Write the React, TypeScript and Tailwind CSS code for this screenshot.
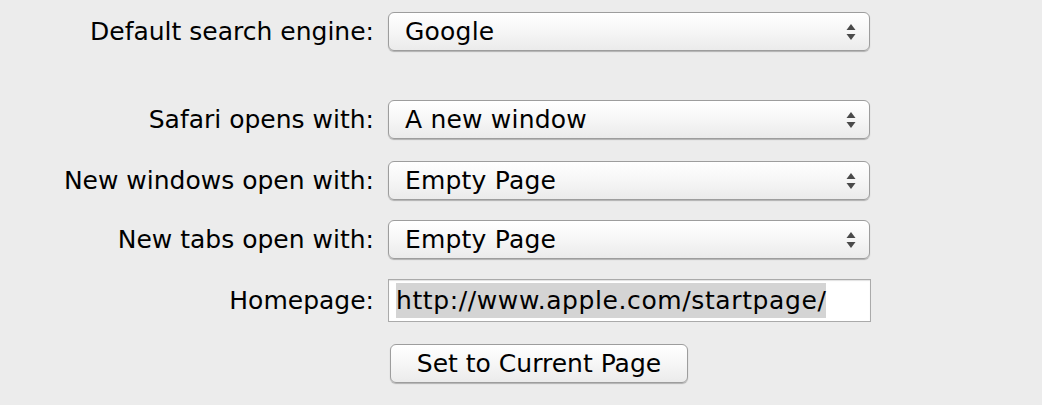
import React from 'react';

const FONT = { fontFamily: '"DejaVu Sans", "Liberation Sans", sans-serif' };

function Arrows() {
  return (
    <svg width="12" height="20" viewBox="0 0 12 20" className="shrink-0">
      <path d="M6 2 L10.5 8 L1.5 8 Z" fill="#4a4a4a" />
      <path d="M6 18 L10.5 12 L1.5 12 Z" fill="#4a4a4a" />
    </svg>
  );
}

function PopUp({ value }: { value: string }) {
  return (
    <div className="flex h-[39px] w-[482px] items-center justify-between rounded-[6px] border border-[#9d9d9d] bg-gradient-to-b from-white via-[#f6f6f6] to-[#ebebeb] pl-[16px] pr-[12px] shadow-[0_1px_1px_rgba(0,0,0,0.25)]">
      <span className="text-[25px] leading-none tracking-[0.2px] text-black">{value}</span>
      <Arrows />
    </div>
  );
}

function Row({ label, children, className = '' }: { label: string; children: React.ReactNode; className?: string }) {
  return (
    <div className={`flex items-center ${className}`}>
      <div className="w-[374px] text-right text-[25px] leading-none text-black">{label}</div>
      <div className="ml-[14px]">{children}</div>
    </div>
  );
}

export default function App() {
  return (
    <div className="h-[405px] w-[1042px] overflow-hidden bg-[#ececec] pt-[12px]" style={FONT}>
      <Row label="Default search engine:">
        <PopUp value="Google" />
      </Row>
      <Row label="Safari opens with:" className="mt-[49px]">
        <PopUp value="A new window" />
      </Row>
      <Row label="New windows open with:" className="mt-[22px]">
        <PopUp value="Empty Page" />
      </Row>
      <Row label="New tabs open with:" className="mt-[20px]">
        <PopUp value="Empty Page" />
      </Row>
      <Row label="Homepage:" className="mt-[20px]">
        <div className="flex h-[43px] w-[483px] items-center border border-[#aaaaaa] bg-white px-[7px] shadow-[inset_0_1px_1px_rgba(0,0,0,0.12)]">
          <span className="bg-[#d4d4d4] py-[5px] text-[25px] leading-none tracking-[0.6px] text-black">http://www.apple.com/startpage/</span>
        </div>
      </Row>
      <div className="mt-[22px] pl-[390px]">
        <div className="flex h-[39px] w-[298px] items-center justify-center rounded-[6px] border border-[#9d9d9d] bg-gradient-to-b from-white via-[#f6f6f6] to-[#ebebeb] shadow-[0_1px_1px_rgba(0,0,0,0.25)]">
          <span className="text-[25px] leading-none text-black">Set to Current Page</span>
        </div>
      </div>
    </div>
  );
}
